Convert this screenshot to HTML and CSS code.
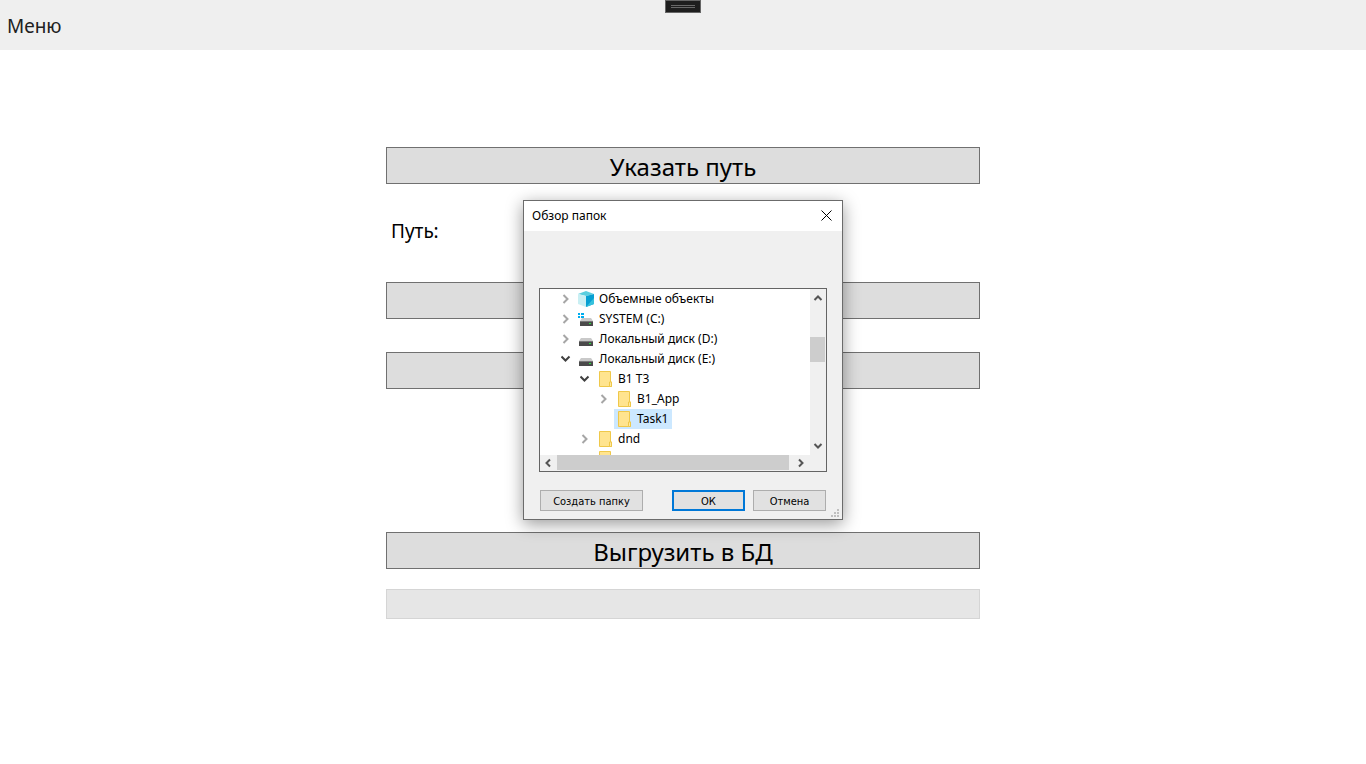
FILE: index.html
```
<!DOCTYPE html>
<html lang="ru">
<head>
<meta charset="utf-8">
<meta name="viewport" content="width=device-width, initial-scale=1">
<title>Обзор папок</title>
<link rel="stylesheet" href="styles.css">
</head>
<body>
<svg class="sprite" aria-hidden="true">
  <symbol id="closed" viewBox="0 0 10 10"><path d="M2.500 1l4 4-4 4" fill="none" stroke="#a6a6a6" stroke-width="2"/></symbol>
  <symbol id="open" viewBox="0 0 10 10"><path d="M.5 2.500l4 4 4-4" fill="none" stroke="#404040" stroke-width="2"/></symbol>
  <symbol id="folder" viewBox="0 0 16 16">
    <path d="M2.500.5h11v10.500h1v4.500h-12z" fill="#ffe48f" stroke="#efc84a"/>
    <path d="M12.500 15.500v-4.500h2v4.500z" fill="#ffe9a2" stroke="#efc84a"/>
  </symbol>
  <symbol id="disk" viewBox="0 0 16 16">
    <path d="M3 7h10l2 3H1z" fill="#c9c9c9"/>
    <path d="M1 10h14v5H1z" fill="#4a4a4a"/>
    <path d="M1 10h14v1H1z" fill="#777"/>
    <path d="M11 12h2v1h-2z" fill="#27e03c"/>
  </symbol>
  <symbol id="system" viewBox="0 0 16 16">
    <path d="M4 7h9l2 3H2z" fill="#c9c9c9"/>
    <path d="M2 10h13v5H2z" fill="#4a4a4a"/>
    <path d="M2 10h13v1H2z" fill="#777"/>
    <path d="M11 12h2v1h-2z" fill="#27e03c"/>
    <path d="M0 2h2v2H0zM3 2h3v2H3zM0 5h2v2H0zM3 5h3v2H3z" fill="#00adef"/>
  </symbol>
  <symbol id="cube" viewBox="0 0 16 16">
    <path d="M0 3l8-3 8 3-8 2z" fill="#5bcfdf"/>
    <path d="M0 3l8 2v11l-8-3z" fill="#c9eff3"/>
    <path d="M16 3L8 5v11l8-3z" fill="#079fd2"/>
    <path d="M16 7v6l-8 3z" fill="#36c1dc"/>
  </symbol>
  <symbol id="arrow" viewBox="0 0 10 10"><path d="M1.500 7L5 3.500 8.500 7" fill="none" stroke="#555" stroke-width="2"/></symbol>
</svg>

<header class="menubar">
  <button class="menu" type="button">Меню</button>
  <span class="grip"></span>
</header>

<main class="form">
  <button class="action" type="button">Указать путь</button>
  <p class="path">Путь:</p>
  <button class="action" type="button" aria-label="Действие 1"></button>
  <button class="action action-second" type="button" aria-label="Действие 2"></button>
  <button class="action action-upload" type="button">Выгрузить в БД</button>
  <progress class="progress" value="0" max="100" aria-label="Ход выгрузки"></progress>
</main>

<div class="layer">
  <section class="dialog" role="dialog" aria-labelledby="dialog-title">
    <div class="titlebar">
      <h1 class="title" id="dialog-title">Обзор папок</h1>
      <button class="close" type="button" aria-label="Закрыть"><svg viewBox="0 0 11 11"><path d="M.5.5l10 10M10.500.5l-10 10" stroke="#000" fill="none"/></svg></button>
    </div>
    <div class="browser">
      <ul class="tree" role="tree">
        <li><div class="row"><svg class="chevron"><use href="#closed"/></svg><button class="node" type="button"><svg class="icon"><use href="#cube"/></svg>Объемные объекты</button></div></li>
        <li><div class="row"><svg class="chevron"><use href="#closed"/></svg><button class="node" type="button"><svg class="icon"><use href="#system"/></svg>SYSTEM (C:)</button></div></li>
        <li><div class="row"><svg class="chevron"><use href="#closed"/></svg><button class="node" type="button"><svg class="icon"><use href="#disk"/></svg>Локальный диск (D:)</button></div></li>
        <li><div class="row"><svg class="chevron"><use href="#open"/></svg><button class="node" type="button"><svg class="icon"><use href="#disk"/></svg>Локальный диск (E:)</button></div>
          <ul class="branch">
            <li><div class="row"><svg class="chevron"><use href="#open"/></svg><button class="node" type="button"><svg class="icon"><use href="#folder"/></svg>B1 T3</button></div>
              <ul class="branch">
                <li><div class="row"><svg class="chevron"><use href="#closed"/></svg><button class="node" type="button"><svg class="icon"><use href="#folder"/></svg>B1_App</button></div></li>
                <li><div class="row"><span class="chevron"></span><button class="node selected" type="button"><svg class="icon"><use href="#folder"/></svg>Task1</button></div></li>
              </ul>
            </li>
            <li><div class="row"><svg class="chevron"><use href="#closed"/></svg><button class="node" type="button"><svg class="icon"><use href="#folder"/></svg>dnd</button></div></li>
            <li><div class="row"><span class="chevron"></span><button class="node" type="button" aria-label="Папка"><svg class="icon"><use href="#folder"/></svg></button></div></li>
          </ul>
        </li>
      </ul>
      <div class="vscroll">
        <svg class="arrow"><use href="#arrow"/></svg>
        <span class="vthumb"></span>
        <svg class="arrow down"><use href="#arrow"/></svg>
      </div>
      <div class="hscroll">
        <svg class="arrow left"><use href="#arrow"/></svg>
        <span class="hthumb"></span>
        <svg class="arrow right"><use href="#arrow"/></svg>
      </div>
    </div>
    <div class="buttons">
      <button class="button create" type="button">Создать папку</button>
      <button class="button ok" type="button">ОК</button>
      <button class="button" type="button">Отмена</button>
    </div>
    <svg class="resize" viewBox="0 0 8 8"><path d="M6 0h2v2H6zM3 3h2v2H3zM6 3h2v2H6zM0 6h2v2H0zM3 6h2v2H3zM6 6h2v2H6z" fill="#bfbfbf"/></svg>
  </section>
</div>
</body>
</html>
```
FILE: styles.css
```
* { box-sizing: border-box; }
body {
  margin: 0;
  background: #fff;
  color: #000;
  font-family: "Noto Sans", "Open Sans", sans-serif;
}
button { font-family: inherit; color: inherit; }
ul { list-style: none; margin: 0; padding: 0; }
.sprite { display: none; }

.menubar {
  position: relative;
  display: flex;
  height: 50px;
  background: #efefef;
}
.menu {
  padding: 2px 7px 0;
  border: 0;
  background: none;
  color: #212121;
  font-size: 19px;
}
.grip {
  position: absolute;
  top: 0;
  left: 50%;
  width: 36px;
  height: 13px;
  margin-left: -18px;
  padding: 4px 5px;
  border: 1px solid #666;
  background: #1e1e1e;
}
.grip::before {
  content: "";
  display: block;
  height: 1px;
  border: solid #686868;
  border-width: 1px 0;
}

.form {
  display: flex;
  flex-direction: column;
  width: min(594px, 90%);
  margin: 0 auto;
  padding-top: 97px;
}
.action {
  height: 37px;
  padding: 3px 0 0;
  border: 1px solid #707070;
  background: #ddd;
  font-size: 24px;
  line-height: 32px;
}
.path {
  margin: 33px 5px 37px;
  font-size: 19px;
  line-height: 28px;
}
.action-second { margin-top: 33px; }
.action-upload { margin-top: 143px; }
.progress {
  appearance: none;
  width: 100%;
  height: 30px;
  margin-top: 20px;
  border: 1px solid #d5d5d5;
  background: #e6e6e6;
}
.progress::-webkit-progress-bar { background: #e6e6e6; }

.layer {
  position: absolute;
  inset: 0;
  display: flex;
  justify-content: center;
  align-items: flex-start;
  padding-top: 200px;
  pointer-events: none;
}
.dialog {
  position: relative;
  width: 320px;
  border: 1px solid #6b6b6b;
  background: #f0f0f0;
  box-shadow: 0 4px 16px rgba(0, 0, 0, .4);
  font-size: 12px;
  pointer-events: auto;
}
.titlebar {
  display: flex;
  justify-content: space-between;
  align-items: center;
  height: 30px;
  padding: 0 10px 2px 8px;
  background: #fff;
}
.title { margin: 0; font-size: 12px; font-weight: 400; }
.close { display: flex; padding: 0; border: 0; background: none; }
.close svg { width: 11px; height: 11px; }

.browser {
  display: grid;
  grid-template-columns: 1fr 16px;
  grid-template-rows: 166px 16px;
  margin: 57px 15px 0;
  border: 1px solid #646464;
}
.tree { overflow: hidden; padding-left: 16px; background: #fff; }
.branch { padding-left: 19px; }
.row { display: flex; height: 20px; align-items: center; }
.chevron { width: 10px; height: 10px; margin: 0 5px; }
.node {
  display: flex;
  align-items: center;
  gap: 5px;
  height: 20px;
  padding: 0 4px 2px 2px;
  border: 0;
  background: none;
  font-size: 12px;
  white-space: nowrap;
}
.selected { background: #cce8ff; }
.icon { width: 16px; height: 16px; margin-top: 2px; }

.vscroll {
  display: flex;
  flex-direction: column;
  justify-content: space-between;
  padding: 4px 1px 4px 0;
}
.vthumb { height: 25px; margin-bottom: 45px; background: #cdcdcd; }
.hscroll {
  grid-column: 1 / -1;
  display: flex;
  align-items: center;
  padding: 0 20px 1px 3px;
}
.hthumb { flex: 1; height: 15px; margin: 0 7px 0 4px; background: #cdcdcd; }
.arrow { width: 10px; height: 10px; margin: 0 auto; }
.hscroll .arrow { margin: 0; }
.down { transform: rotate(180deg); }
.left { transform: rotate(-90deg); }
.right { transform: rotate(90deg); }

.buttons {
  display: flex;
  gap: 8px;
  padding: 18px 16px 8px;
}
.button {
  width: 73px;
  height: 21px;
  padding: 1px 0 0;
  border: 1px solid #adadad;
  background: #e1e1e1;
  font-family: "DejaVu Sans Condensed", "DejaVu Sans", sans-serif;
  font-size: 11px;
}
.create { width: 103px; margin-right: auto; }
.ok { border: 2px solid #0078d7; }
.resize { position: absolute; right: 3px; bottom: 2px; width: 8px; height: 8px; }
```
